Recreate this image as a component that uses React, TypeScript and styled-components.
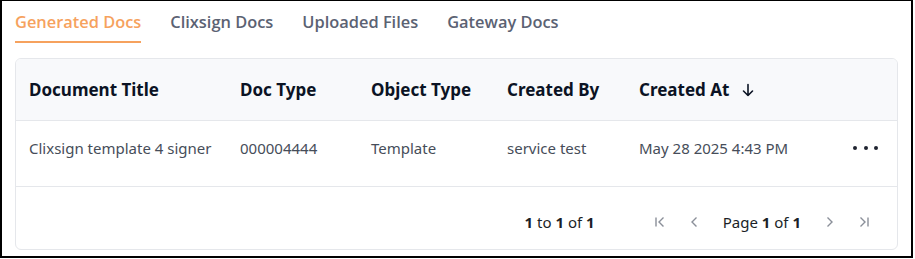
import styled, { createGlobalStyle } from "styled-components"

const GlobalStyle = createGlobalStyle`
    body {
        margin: 0;
        background: #ffffff;
    }
`

const tabs = ["Generated Docs", "Clixsign Docs", "Uploaded Files", "Gateway Docs"]

const columns = ["Document Title", "Doc Type", "Object Type", "Created By", "Created At"]

const rows = [
    {
        title: "Clixsign template 4 signer",
        docType: "000004444",
        objectType: "Template",
        createdBy: "service test",
        createdAt: "May 28 2025 4:43 PM",
    },
]

export default function App() {
    return (
        <Frame>
            <GlobalStyle />
            <TabBar>
                {tabs.map((tab, i) => (
                    <Tab key={tab} $active={i === 0}>
                        {tab}
                    </Tab>
                ))}
            </TabBar>
            <Card>
                <HeaderRow>
                    {columns.map((col) => (
                        <HeaderCell key={col}>
                            {col}
                            {col === "Created At" && (
                                <SortIcon viewBox="0 0 16 16">
                                    <path
                                        d="M8 2.5v11M3.5 9l4.5 4.5L12.5 9"
                                        fill="none"
                                        stroke="currentColor"
                                        strokeWidth="1.6"
                                        strokeLinecap="round"
                                        strokeLinejoin="round"
                                    />
                                </SortIcon>
                            )}
                        </HeaderCell>
                    ))}
                    <HeaderCell />
                </HeaderRow>
                {rows.map((row) => (
                    <BodyRow key={row.title}>
                        <Cell>{row.title}</Cell>
                        <Cell>{row.docType}</Cell>
                        <Cell>{row.objectType}</Cell>
                        <Cell>{row.createdBy}</Cell>
                        <Cell>{row.createdAt}</Cell>
                        <ActionCell>
                            <Dots>
                                <Dot />
                                <Dot />
                                <Dot />
                            </Dots>
                        </ActionCell>
                    </BodyRow>
                ))}
                <Footer>
                    <Summary>
                        <b>1</b> to <b>1</b> of <b>1</b>
                    </Summary>
                    <Pager>
                        <PagerButton>
                            <svg viewBox="0 0 16 16" width="16" height="16">
                                <path d="M4 3.5v9" stroke="currentColor" strokeWidth="1.4" />
                                <path d="M11.5 3.5L7 8l4.5 4.5" fill="none" stroke="currentColor" strokeWidth="1.4" />
                            </svg>
                        </PagerButton>
                        <PagerButton>
                            <svg viewBox="0 0 16 16" width="16" height="16">
                                <path d="M10.5 3.5L6 8l4.5 4.5" fill="none" stroke="currentColor" strokeWidth="1.4" />
                            </svg>
                        </PagerButton>
                        <PageLabel>
                            Page <b>1</b> of <b>1</b>
                        </PageLabel>
                        <PagerButton>
                            <svg viewBox="0 0 16 16" width="16" height="16">
                                <path d="M5.5 3.5L10 8l-4.5 4.5" fill="none" stroke="currentColor" strokeWidth="1.4" />
                            </svg>
                        </PagerButton>
                        <PagerButton>
                            <svg viewBox="0 0 16 16" width="16" height="16">
                                <path d="M4.5 3.5L9 8l-4.5 4.5" fill="none" stroke="currentColor" strokeWidth="1.4" />
                                <path d="M12 3.5v9" stroke="currentColor" strokeWidth="1.4" />
                            </svg>
                        </PagerButton>
                    </Pager>
                </Footer>
            </Card>
        </Frame>
    )
}

const Frame = styled.div`
    width: 913px;
    height: 258px;
    box-sizing: border-box;
    border: 2px solid #000000;
    border-top-width: 1px;
    padding: 0 13px;
    background: #ffffff;
`

const TabBar = styled.div`
    display: flex;
    gap: 29px;
    height: 42px;
`

const Tab = styled.div<{ $active: boolean }>`
    font-family: "Open Sans", sans-serif;
    font-size: 16.4px;
    font-weight: 600;
    color: ${(p) => (p.$active ? "#f6a25e" : "#5b6273")};
    padding-top: 9px;
    box-sizing: border-box;
    height: 42px;
    border-bottom: 2px solid ${(p) => (p.$active ? "#f6a25e" : "transparent")};
`

const Card = styled.div`
    margin-top: 15px;
    border: 1px solid #e5e7eb;
    border-radius: 6px;
    overflow: hidden;
    font-family: "Noto Sans", sans-serif;
`

const grid = `
    display: grid;
    grid-template-columns: 211px 131px 136px 132px 1fr 44px;
    padding-left: 13px;
    align-items: center;
`

const HeaderRow = styled.div`
    ${grid}
    height: 61px;
    background: #f8f9fb;
    border-bottom: 1px solid #e5e7eb;
`

const HeaderCell = styled.div`
    display: flex;
    align-items: center;
    gap: 11px;
    font-size: 17px;
    font-weight: 700;
    color: #0b1324;
`

const SortIcon = styled.svg`
    width: 16px;
    height: 16px;
    color: #0b1324;
`

const BodyRow = styled.div`
    ${grid}
    height: 65px;
    border-bottom: 1px solid #e5e7eb;

    & > * {
        margin-top: -12px;
    }
`

const Cell = styled.div`
    font-size: 15px;
    color: #464d59;
    white-space: nowrap;
`

const ActionCell = styled.div`
    display: flex;
    justify-content: flex-start;
`

const Dots = styled.div`
    display: flex;
    gap: 6.5px;
`

const Dot = styled.span`
    width: 4px;
    height: 4px;
    border-radius: 50%;
    background: #1f2430;
`

const Footer = styled.div`
    height: 62px;
    display: flex;
    align-items: center;
    justify-content: flex-end;
    padding: 8px 25px 0 0;
    box-sizing: border-box;
    font-size: 15px;
    color: #1b1f27;
`

const Summary = styled.div`
    margin-right: 57px;
`

const Pager = styled.div`
    display: flex;
    align-items: center;
    gap: 18px;
`

const PagerButton = styled.span`
    display: flex;
    color: #8a8f99;
`

const PageLabel = styled.span`
    margin: 0 3px;
`
